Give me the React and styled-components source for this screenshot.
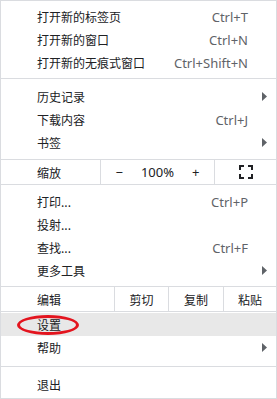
import React from 'react'
import styled, {createGlobalStyle} from 'styled-components'

const Global = createGlobalStyle`
  html, body {
    margin: 0;
    padding: 0;
    background: #ffffff;
  }
`

const Menu = styled.div`
  width: 277px;
  height: 399px;
  box-sizing: border-box;
  border: 1px solid #dadce0;
  background: #ffffff;
  font-family: "Noto Sans CJK SC", "Noto Sans", sans-serif;
  font-size: 12px;
  color: #202124;
  overflow: hidden;
`

const Group = styled.div`
  padding: ${p => p.$pt}px 0 ${p => p.$pb}px;
  border-bottom: ${p => (p.$last ? 'none' : '1px solid #dadce0')};
`

const Item = styled.div`
  position: relative;
  display: flex;
  align-items: center;
  justify-content: space-between;
  height: 23px;
  padding: 0 ${p => (p.$arrow ? 9 : 28)}px 0 36px;
  background: ${p => (p.$active ? '#e8e8e8' : 'transparent')};
`

const Shortcut = styled.span`
  font-family: "Noto Sans", "Liberation Sans", sans-serif;
  font-size: 13px;
  color: #5f6368;
`

const ControlRow = styled.div`
  display: grid;
  grid-template-columns: ${p => p.$cols};
  height: 24px;
  border-bottom: 1px solid #dadce0;
`

const Cell = styled.div`
  display: flex;
  align-items: center;
  justify-content: ${p => (p.$label ? 'flex-start' : 'center')};
  padding-left: ${p => (p.$label ? '36px' : '0')};
  border-left: ${p => (p.$label ? 'none' : '1px solid #dadce0')};
`

const Zoomer = styled.div`
  display: flex;
  align-items: center;
  justify-content: space-between;
  width: 84px;
  font-family: "Noto Sans", "Liberation Sans", sans-serif;
  font-size: 13px;
`

// red annotation ring drawn over the settings row
const Ring = styled.div`
  position: absolute;
  left: 16px;
  top: 2px;
  width: 62px;
  height: 20px;
  box-sizing: border-box;
  border: 3px solid #e3141e;
  border-radius: 50%;
`

const Arrow = () => (
  <svg width="5" height="9" viewBox="0 0 5 9">
    <path d="M0 0 L5 4.5 L0 9 Z" fill="#5f6368" />
  </svg>
)

const Fullscreen = () => (
  <svg width="14" height="14" viewBox="0 0 14 14" fill="none" stroke="#202124" strokeWidth="2">
    <path d="M1 5 V1 H5" />
    <path d="M9 1 H13 V5" />
    <path d="M13 9 V13 H9" />
    <path d="M5 13 H1 V9" />
  </svg>
)

const Row = ({label, shortcut, arrow, active, children}) => (
  <Item $arrow={arrow} $active={active}>
    <span>{label}</span>
    {shortcut && <Shortcut>{shortcut}</Shortcut>}
    {arrow && <Arrow />}
    {children}
  </Item>
)

export default function App() {
  return (
    <>
      <Global />
      <Menu>
        <Group $pt={4} $pb={4}>
          <Row label="打开新的标签页" shortcut="Ctrl+T" />
          <Row label="打开新的窗口" shortcut="Ctrl+N" />
          <Row label="打开新的无痕式窗口" shortcut="Ctrl+Shift+N" />
        </Group>
        <Group $pt={6} $pb={5}>
          <Row label="历史记录" arrow />
          <Row label="下载内容" shortcut="Ctrl+J" />
          <Row label="书签" arrow />
        </Group>
        <ControlRow $cols="99px 114px 1fr">
          <Cell $label>缩放</Cell>
          <Cell>
            <Zoomer>
              <span>−</span>
              <span>100%</span>
              <span>+</span>
            </Zoomer>
          </Cell>
          <Cell><Fullscreen /></Cell>
        </ControlRow>
        <Group $pt={5} $pb={4}>
          <Row label="打印..." shortcut="Ctrl+P" />
          <Row label="投射..." />
          <Row label="查找..." shortcut="Ctrl+F" />
          <Row label="更多工具" arrow />
        </Group>
        <ControlRow $cols="113px 54px 55px 1fr">
          <Cell $label>编辑</Cell>
          <Cell>剪切</Cell>
          <Cell>复制</Cell>
          <Cell>粘贴</Cell>
        </ControlRow>
        <Group $pt={1} $pb={7}>
          <Row label="设置" active>
            <Ring />
          </Row>
          <Row label="帮助" arrow />
        </Group>
        <Group $pt={6} $pb={0} $last>
          <Row label="退出" />
        </Group>
      </Menu>
    </>
  )
}
